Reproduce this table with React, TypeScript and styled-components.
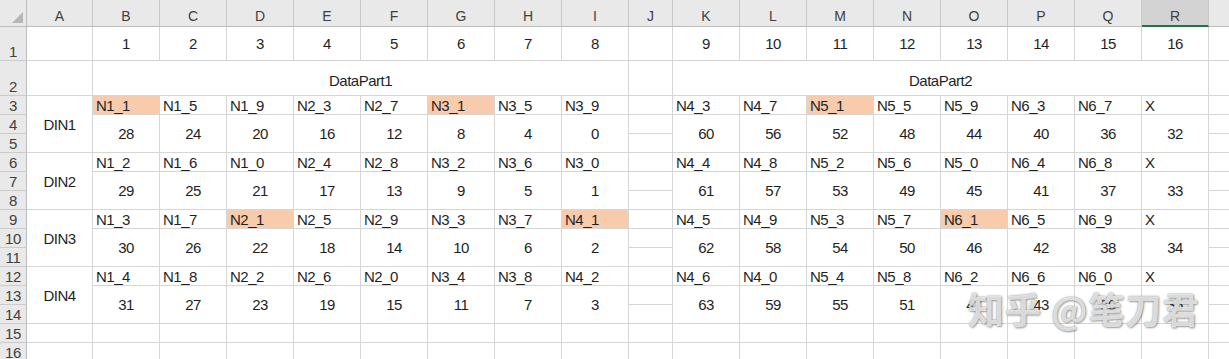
import React from 'react';
import styled, { createGlobalStyle } from 'styled-components';

const GlobalStyle = createGlobalStyle`
  html, body {
    margin: 0;
    padding: 0;
    background: #ffffff;
  }
  body {
    font-family: 'Liberation Sans', Arial, sans-serif;
  }
`;

const Sheet = styled.div`
  position: relative;
  width: 1229px;
  height: 359px;
  overflow: hidden;
  display: grid;
  grid-template-columns: 27px 66px repeat(8, 67px) 44px repeat(8, 67px) 67px;
  grid-template-rows: 27px 34px 35px repeat(14, 19px);
  background: #ffffff;
`;

interface PlaceProps {
  readonly $r: number;
  readonly $c: number;
  readonly $rs?: number;
  readonly $cs?: number;
}

const Placed = styled.div<PlaceProps>`
  grid-row: ${({ $r, $rs = 1 }) => `${$r} / span ${$rs}`};
  grid-column: ${({ $c, $cs = 1 }) => `${$c} / span ${$cs}`};
  box-sizing: border-box;
  min-width: 0;
  overflow: hidden;
  white-space: nowrap;
`;

const Corner = styled(Placed)`
  background: #e9e9e9;
  border-right: 1px solid #bdbdbd;
  border-bottom: 1px solid #bdbdbd;
  display: flex;
  align-items: flex-end;
  justify-content: flex-end;
  padding: 0 3px 3px 0;
`;

const CornerMark = styled.div`
  width: 0;
  height: 0;
  border-left: 11px solid transparent;
  border-bottom: 11px solid #b7b7b7;
`;

const ColHeader = styled(Placed)<{ $selected?: boolean }>`
  background: ${({ $selected }) => ($selected ? '#d3d3d3' : '#e9e9e9')};
  border-right: 1px solid #c9c9c9;
  border-bottom: ${({ $selected }) => ($selected ? '2px solid #217346' : '1px solid #bdbdbd')};
  color: #3f3f3f;
  font-size: 14px;
  line-height: 1;
  display: flex;
  align-items: flex-end;
  justify-content: center;
  padding-bottom: ${({ $selected }) => ($selected ? '2px' : '3px')};
`;

const RowHeader = styled(Placed)`
  background: #e9e9e9;
  border-right: 1px solid #bdbdbd;
  border-bottom: 1px solid #cbcbcb;
  color: #3f3f3f;
  font-size: 15px;
  line-height: 1;
  display: flex;
  align-items: flex-end;
  justify-content: center;
  padding-bottom: 1px;
  letter-spacing: -0.3px;
`;

type Align = 'left' | 'center';

interface CellProps {
  readonly $align?: Align;
  readonly $fill?: boolean;
  readonly $lift?: number;
}

const Cell = styled(Placed)<CellProps>`
  background: ${({ $fill }) => ($fill ? '#f8cbad' : '#ffffff')};
  border-right: 1px solid #d6d6d6;
  border-bottom: 1px solid #d6d6d6;
  color: #1f1f1f;
  font-size: 15px;
  letter-spacing: -0.5px;
  line-height: 1;
  display: flex;
  align-items: center;
  justify-content: ${({ $align = 'center' }) => ($align === 'left' ? 'flex-start' : 'center')};
  padding: ${({ $lift = 0 }) => `${$lift}px 0 0`};
  padding-left: ${({ $align = 'center' }) => ($align === 'left' ? '3px' : '0')};
`;

const Watermark = styled.div`
  position: absolute;
  left: 968px;
  top: 290px;
  font-family: 'Noto Sans CJK SC', sans-serif;
  font-size: 36px;
  font-weight: 700;
  line-height: 1;
  letter-spacing: 1px;
  color: rgba(255, 255, 255, 0.72);
  text-shadow: 0 0 2px rgba(110, 110, 110, 0.85), 1px 1px 2px rgba(0, 0, 0, 0.3);
  pointer-events: none;
  white-space: nowrap;
`;

// S is off the right edge, so its letter is not shown
const LETTERS = 'ABCDEFGHIJKLMNOPQR'.split('').concat('');
const SELECTED_COL = 18; // R

const LABELS: string[][] = [
  ['N1_1', 'N1_5', 'N1_9', 'N2_3', 'N2_7', 'N3_1', 'N3_5', 'N3_9', 'N4_3', 'N4_7', 'N5_1', 'N5_5', 'N5_9', 'N6_3', 'N6_7', 'X'],
  ['N1_2', 'N1_6', 'N1_0', 'N2_4', 'N2_8', 'N3_2', 'N3_6', 'N3_0', 'N4_4', 'N4_8', 'N5_2', 'N5_6', 'N5_0', 'N6_4', 'N6_8', 'X'],
  ['N1_3', 'N1_7', 'N2_1', 'N2_5', 'N2_9', 'N3_3', 'N3_7', 'N4_1', 'N4_5', 'N4_9', 'N5_3', 'N5_7', 'N6_1', 'N6_5', 'N6_9', 'X'],
  ['N1_4', 'N1_8', 'N2_2', 'N2_6', 'N2_0', 'N3_4', 'N3_8', 'N4_2', 'N4_6', 'N4_0', 'N5_4', 'N5_8', 'N6_2', 'N6_6', 'N6_0', 'X'],
];

interface CellSpec {
  r: number; // excel row
  c: number; // excel column, A = 1
  rs: number;
  cs: number;
  text?: string;
  align?: Align;
  fill?: boolean;
  lift?: number;
}

// excel column of the k-th data column (B..I, then K..R)
const dataCol = (k: number) => (k < 8 ? 2 + k : 3 + k);

const buildCells = (): CellSpec[] => {
  const cells: CellSpec[] = [];

  for (let k = 0; k < 16; k++) {
    cells.push({ r: 1, c: dataCol(k), rs: 1, cs: 1, text: String(k + 1) });
  }
  cells.push({ r: 2, c: 2, rs: 1, cs: 8, text: 'DataPart1', lift: 5 });
  cells.push({ r: 2, c: 11, rs: 1, cs: 8, text: 'DataPart2', lift: 5 });

  LABELS.forEach((labels, d) => {
    const top = 3 + d * 3;
    cells.push({ r: top, c: 1, rs: 3, cs: 1, text: `DIN${d + 1}` });
    labels.forEach((label, k) => {
      const base = k < 8 ? 28 : 60;
      const value = base + d - 4 * (k % 8);
      cells.push({ r: top, c: dataCol(k), rs: 1, cs: 1, text: label, align: 'left', fill: label.endsWith('_1') });
      cells.push({ r: top + 1, c: dataCol(k), rs: 2, cs: 1, text: String(value) });
    });
  });

  const covered = new Set<string>();
  cells.forEach(({ r, c, rs, cs }) => {
    for (let i = 0; i < rs; i++) for (let j = 0; j < cs; j++) covered.add(`${r + i}-${c + j}`);
  });
  for (let r = 1; r <= 16; r++) {
    for (let c = 1; c <= 19; c++) {
      if (!covered.has(`${r}-${c}`)) cells.push({ r, c, rs: 1, cs: 1 });
    }
  }
  return cells;
};

const CELLS = buildCells();

const App: React.FC = () => (
  <>
    <GlobalStyle />
    <Sheet>
      <Corner $r={1} $c={1}>
        <CornerMark />
      </Corner>
      {LETTERS.map((letter, i) => (
        <ColHeader key={i} $r={1} $c={i + 2} $selected={i + 1 === SELECTED_COL}>
          {letter}
        </ColHeader>
      ))}
      {Array.from({ length: 16 }, (_, i) => (
        <RowHeader key={i} $r={i + 2} $c={1}>
          {i + 1}
        </RowHeader>
      ))}
      {CELLS.map(({ r, c, rs, cs, text, align, fill, lift }) => (
        <Cell key={`${r}-${c}`} $r={r + 1} $c={c + 1} $rs={rs} $cs={cs} $align={align} $fill={fill} $lift={lift}>
          {text}
        </Cell>
      ))}
      <Watermark>知乎 @笔刀君</Watermark>
    </Sheet>
  </>
);

export default App;
